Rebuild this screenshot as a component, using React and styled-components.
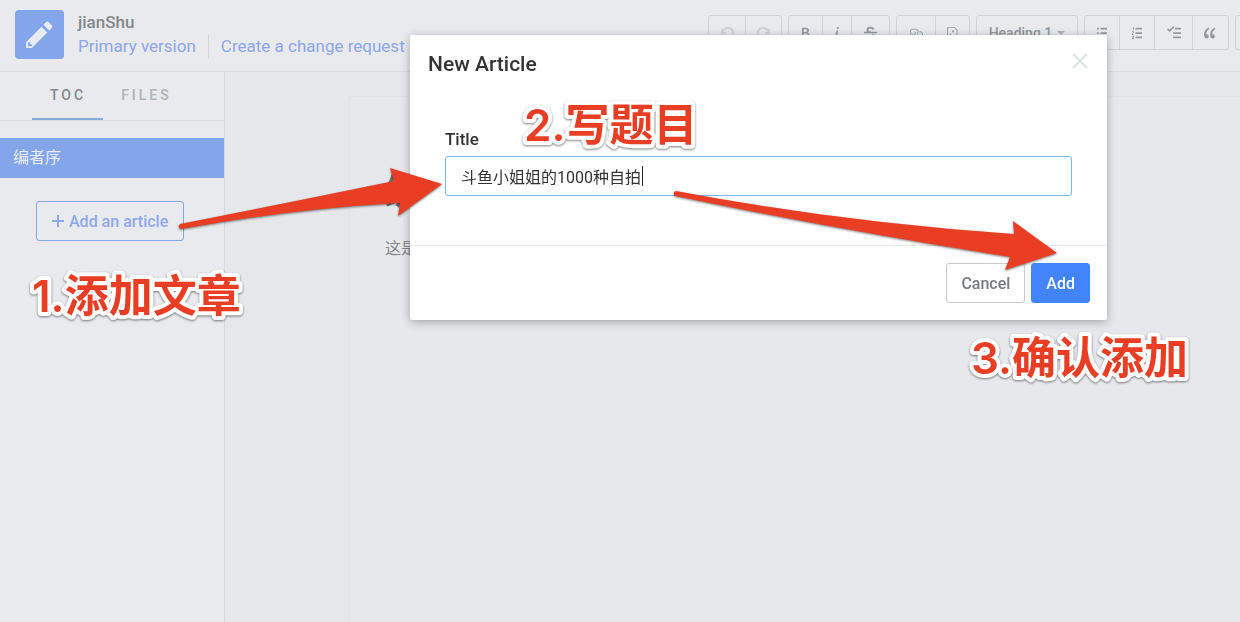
import React, { useState } from "react";
import styled, { createGlobalStyle } from "styled-components";
import { FaStrikethrough } from "react-icons/fa";

const GlobalStyle = createGlobalStyle`
  * {
    box-sizing: border-box;
  }
  body {
    margin: 0;
    background: #e5e7ea;
    color: #85888c;
    font-family: Roboto, "Noto Sans CJK SC", sans-serif;
    font-size: 16px;
  }
  button,
  input {
    font-family: inherit;
  }
`;

const icons = {
  pencil: {
    box: "0 0 14 16",
    d: "M0 12v3h3l8-8-3-3L0 12zm3 2H1v-2h1v1h1v1zm10.3-9.3L12 6 9 3l1.3-1.3a.996.996 0 0 1 1.41 0l1.59 1.59c.39.39.39 1.02 0 1.41z",
  },
  bold: {
    box: "0 0 10 16",
    d: "M1 2h3.83c2.48 0 4.3.75 4.3 2.95 0 1.14-.63 2.23-1.67 2.61v.06c1.33.3 2.3 1.23 2.3 2.86 0 2.39-1.97 3.52-4.61 3.52H1V2zm3.66 4.95c1.67 0 2.38-.66 2.38-1.69 0-1.17-.78-1.61-2.34-1.61H3.13v3.3h1.53zm.27 5.39c1.77 0 2.75-.64 2.75-1.98 0-1.27-.95-1.81-2.75-1.81h-1.8v3.8h1.8v-.01z",
  },
  italic: {
    box: "0 0 6 16",
    d: "M2.81 5h1.98L3 14H1l1.81-9zm.36-2.7c0-.7.58-1.3 1.33-1.3.56 0 1.13.38 1.13 1.03 0 .75-.59 1.3-1.33 1.3-.58 0-1.13-.38-1.13-1.03z",
  },
  link: {
    box: "0 0 16 16",
    d: "M4 9h1v1H4c-1.5 0-3-1.69-3-3.5S2.55 3 4 3h4c1.45 0 3 1.69 3 3.5 0 1.41-.91 2.72-2 3.25V8.59c.58-.45 1-1.27 1-2.09C10 5.22 8.98 4 8 4H4c-.98 0-2 1.22-2 2.5S3 9 4 9zm9-3h-1v1h1c1 0 2 1.22 2 2.5S13.98 12 13 12H9c-.98 0-2-1.22-2-2.5 0-.83.42-1.64 1-2.09V6.25c-1.09.53-2 1.84-2 3.25C6 11.31 7.55 13 9 13h4c1.45 0 3-1.69 3-3.5S14.5 6 13 6z",
  },
  media: {
    box: "0 0 12 16",
    d: "M6 5h2v2H6V5zm6-.5V14c0 .55-.45 1-1 1H1c-.55 0-1-.45-1-1V2c0-.55.45-1 1-1h7.5L12 4.5zM11 5L8 2H1v11l3-5 2 4 2-2 3 3V5z",
  },
  bullets: {
    box: "0 0 12 16",
    d: "M0 2h2v2H0zM4 2h8v2H4zM0 7h2v2H0zM4 7h8v2H4zM0 12h2v2H0zM4 12h8v2H4z",
  },
  numbers: {
    box: "0 0 12 16",
    d: "M4 2h8v2H4zM4 7h8v2H4zM4 12h8v2H4zM1 1h1v4H1zM0 6h2v1H0zM1 7h1v1H1zM0 8h1v1H0zM0 9h2v1H0zM0 11h2v1H0zM1 12h1v3H1zM0 13h1v1H0zM0 14h1v1H0z",
  },
  tasks: {
    box: "0 0 16 16",
    d: "M15.41 9H7.59C7 9 7 8.59 7 8c0-.59 0-1 .59-1h7.81c.59 0 .59.41.59 1 0 .59 0 1-.59 1h.01zM9.59 4C9 4 9 3.59 9 3c0-.59 0-1 .59-1h5.81c.59 0 .59.41.59 1 0 .59 0 1-.59 1H9.59zM0 3.91l1.41-1.3L3 4.2 7.09 0 8.5 1.41 3 6.91l-3-3zM7.59 12h7.81c.59 0 .59.41.59 1 0 .59 0 1-.59 1H7.59C7 14 7 13.59 7 13c0-.59 0-1 .59-1z",
  },
  quote: {
    box: "0 0 14 16",
    d: "M6.16 3.5C3.73 5.06 2.55 6.67 2.55 9.36c.16-.05.3-.05.44-.05 1.27 0 2.5.86 2.5 2.41 0 1.61-1.03 2.61-2.5 2.61-1.9 0-2.99-1.52-2.99-4.25 0-3.8 1.75-6.53 5.02-8.42L6.16 3.5zm7 0c-2.43 1.56-3.61 3.17-3.61 5.86.16-.05.3-.05.44-.05 1.27 0 2.5.86 2.5 2.41 0 1.61-1.03 2.61-2.5 2.61-1.89 0-2.98-1.52-2.98-4.25 0-3.8 1.75-6.53 5.02-8.42l1.14 1.84h-.01z",
  },
};

const Icon = ({ name, size = 14 }) => (
  <svg viewBox={icons[name].box} height={size} fill="currentColor" aria-hidden>
    <path d={icons[name].d} />
  </svg>
);

const Turn = ({ flip }) => (
  <svg width="16" height="16" viewBox="0 0 16 16" aria-hidden>
    <g
      fill="none"
      stroke="currentColor"
      strokeWidth="2"
      transform={flip ? "translate(16 0) scale(-1 1)" : undefined}
    >
      <path d="M3 4v4h4" />
      <path d="M3 7C6 1 14 2 14 8c0 4-3 6-7 6" />
    </g>
  </svg>
);

const App = () => {
  const [title, setTitle] = useState("斗鱼小姐姐的1000种自拍");

  return (
    <>
      <GlobalStyle />
      <StyledEditor>
        <StyledHeader>
          <Logo>
            <Icon name="pencil" size={31} />
          </Logo>
          <Book>
            <h1>jianShu</h1>
            <nav>
              <a href="#version">Primary version</a>
              <a href="#change">Create a change request</a>
            </nav>
          </Book>
          <Toolbar>
            <Group>
              <Tool $w={36} $faint aria-label="Undo">
                <Turn />
              </Tool>
              <Tool $w={36} $faint aria-label="Redo">
                <Turn flip />
              </Tool>
            </Group>
            <Group>
              <Tool $w={33} aria-label="Bold">
                <Icon name="bold" />
              </Tool>
              <Tool $w={29} aria-label="Italic">
                <Icon name="italic" />
              </Tool>
              <Tool $w={38} aria-label="Strikethrough">
                <FaStrikethrough size={13} />
              </Tool>
            </Group>
            <Group>
              <Tool $w={38} aria-label="Link">
                <Icon name="link" />
              </Tool>
              <Tool $w={34} aria-label="Image">
                <Icon name="media" />
              </Tool>
            </Group>
            <Group>
              <Tool $w={100}>
                Heading 1 <Caret />
              </Tool>
            </Group>
            <Group>
              <Tool $w={34} aria-label="Bullet list">
                <Icon name="bullets" />
              </Tool>
              <Tool $w={35} aria-label="Numbered list">
                <Icon name="numbers" />
              </Tool>
              <Tool $w={38} aria-label="Task list">
                <Icon name="tasks" />
              </Tool>
              <Tool $w={36} aria-label="Quote">
                <Icon name="quote" />
              </Tool>
            </Group>
            <Group>
              <Tool $w={36} aria-label="More" />
            </Group>
          </Toolbar>
        </StyledHeader>

        <Main>
          <Sidebar>
            <Tabs>
              <Tab $active>TOC</Tab>
              <Tab>FILES</Tab>
            </Tabs>
            <Article href="#preface">编者序</Article>
            <AddArticle>
              <svg width="12" height="12" viewBox="0 0 12 12" aria-hidden>
                <path d="M6 0v12M0 6h12" stroke="currentColor" strokeWidth="2" />
              </svg>
              Add an article
            </AddArticle>
          </Sidebar>
          <Page>
            <h2>编者序</h2>
            <p>这是</p>
          </Page>
        </Main>
      </StyledEditor>

      <Backdrop>
        <Modal role="dialog" aria-labelledby="modal-title">
          <ModalHeader>
            <h3 id="modal-title">New Article</h3>
            <Close aria-label="Close">
              <svg width="16" height="16" viewBox="0 0 16 16" aria-hidden>
                <path d="M1 1l14 14M15 1L1 15" stroke="currentColor" strokeWidth="2" />
              </svg>
            </Close>
          </ModalHeader>
          <ModalBody>
            <label htmlFor="title">Title</label>
            <Field>
              <input
                id="title"
                autoFocus
                value={title}
                onChange={(e) => setTitle(e.target.value)}
              />
              <TextCursor>
                <span>{title}</span>
              </TextCursor>
            </Field>
          </ModalBody>
          <ModalFooter>
            <Button>Cancel</Button>
            <Button $primary>Add</Button>
          </ModalFooter>
        </Modal>
      </Backdrop>

      <Annotations width="1240" height="622" viewBox="0 0 1240 622">
        <path d="M180 224Q287 203 394 181L390 168L442 184L398 216L400 203Q290 209 181 229Q177 227 180 224Z" />
        <path d="M676 191Q840 222 1014 234L1013 221L1057 253L1005 270L1010 257Q840 230 675 196Q672 192 676 191Z" />
        <text x="32" y="312">1.添加文章</text>
        <text x="524" y="141">2.写题目</text>
        <text x="971" y="374">3.确认添加</text>
      </Annotations>
    </>
  );
};

const StyledEditor = styled.div`
  min-height: 100vh;
  display: flex;
  flex-direction: column;
`;

const StyledHeader = styled.header`
  display: flex;
  align-items: flex-start;
  height: 72px;
  padding: 10px 0 0 15px;
  background: #e8eaed;
  border-bottom: 1px solid #dadcdf;
  overflow: hidden;
`;

const Logo = styled.div`
  display: flex;
  flex: none;
  align-items: center;
  justify-content: center;
  width: 49px;
  height: 49px;
  border-radius: 4px;
  background: #83a5e9;
  color: #e8ebf2;
`;

const Book = styled.div`
  flex: none;
  margin-left: 14px;
  line-height: 24px;

  h1 {
    margin: 0;
    font-size: 17px;
    font-weight: 500;
  }
  nav {
    display: flex;
  }
  a {
    color: #8ca6e8;
    font-size: 17px;
    text-decoration: none;
  }
  a + a {
    margin-left: 12px;
    padding-left: 12px;
    border-left: 1px solid #d4d6da;
  }
`;

const Toolbar = styled.div`
  display: flex;
  gap: 6px;
  margin: 5px -33px 0 auto;
`;

const Group = styled.div`
  display: flex;
  height: 35px;
  border: 1px solid #d0d2d5;
  border-radius: 3px;
`;

const Tool = styled.button`
  display: flex;
  align-items: center;
  justify-content: center;
  width: ${({ $w }) => $w}px;
  padding: 0;
  border: 0;
  background: none;
  color: ${({ $faint }) => ($faint ? "#d0d2d5" : "#96999d")};
  font-size: 14px;
  font-weight: 500;

  & + & {
    border-left: 1px solid #d0d2d5;
  }
`;

const Caret = styled.span`
  margin-left: 5px;
  border: 4px solid transparent;
  border-top-color: #b0b2b5;
  border-bottom: 0;
`;

const Main = styled.div`
  display: flex;
  flex: 1;
`;

const Sidebar = styled.aside`
  display: flex;
  flex-direction: column;
  align-items: flex-start;
  width: 225px;
  background: #e8eaed;
  border-right: 1px solid #d6d8db;
`;

const Tabs = styled.div`
  display: flex;
  width: 100%;
  height: 49px;
  padding-left: 32px;
  border-bottom: 1px solid #dadcdf;
`;

const Tab = styled.button`
  padding: 0 17px 0 18px;
  border: 0;
  border-bottom: 2px solid ${({ $active }) => ($active ? "#86a9dc" : "transparent")};
  background: none;
  color: ${({ $active }) => ($active ? "#85888c" : "#b0b2b6")};
  font-size: 14px;
  font-weight: 500;
  letter-spacing: 3px;
`;

const Article = styled.a`
  width: 100%;
  margin-top: 17px;
  padding: 0 13px;
  background: #83a5e9;
  color: #e8ebf2;
  line-height: 40px;
  text-decoration: none;
`;

const AddArticle = styled.button`
  display: flex;
  align-items: center;
  gap: 5px;
  height: 40px;
  margin: 23px 0 0 36px;
  padding: 0 15px;
  border: 1px solid #83a5e9;
  border-radius: 3px;
  background: none;
  color: #8ca9ea;
  font-size: 16px;
  font-weight: 500;
`;

const Page = styled.article`
  flex: 1;
  margin: 24px 0 0 124px;
  padding: 74px 35px;
  background: #e7e8ec;
  border: 1px solid #e0e2e5;
  border-width: 1px 0 0 1px;

  h2 {
    margin: 0;
    color: #6d6f72;
    font-size: 36px;
    line-height: 44px;
  }
  p {
    margin: 21px 0 0;
    line-height: 26px;
  }
`;

const Backdrop = styled.div`
  position: fixed;
  inset: 0;
  padding: 35px 133px 0 410px;
`;

const Modal = styled.div`
  border-radius: 2px;
  background: #fff;
  box-shadow: 0 2px 10px rgba(0, 0, 0, 0.3);
`;

const ModalHeader = styled.div`
  display: flex;
  align-items: center;
  justify-content: space-between;
  height: 57px;
  padding: 0 18px;

  h3 {
    margin: 0;
    color: #333;
    font-size: 21px;
    font-weight: 500;
  }
`;

const Close = styled.button`
  display: flex;
  padding: 0 1px 5px;
  border: 0;
  background: none;
  color: #dde1e1;
`;

const ModalBody = styled.div`
  display: flex;
  flex-direction: column;
  gap: 5px;
  padding: 35px 35px 49px;

  label {
    color: #333;
    font-size: 17px;
    font-weight: 500;
    line-height: 24px;
  }
`;

const Field = styled.div`
  position: relative;
  color: #333;
  font-size: 16px;

  input {
    display: block;
    width: 100%;
    height: 40px;
    padding: 0 15px;
    border: 1px solid #79b8ee;
    border-radius: 3px;
    outline: 0;
    color: inherit;
    font-size: inherit;
    caret-color: transparent;
  }
`;

// steady text cursor, pushed along by a hidden copy of the value
const TextCursor = styled.div`
  position: absolute;
  inset: 10px 15px;
  display: flex;
  overflow: hidden;
  pointer-events: none;

  span {
    visibility: hidden;
    white-space: pre;
  }
  &::after {
    content: "";
    width: 1px;
    margin-left: 2px;
    background: #222;
  }
`;

const ModalFooter = styled.div`
  display: flex;
  justify-content: flex-end;
  gap: 6px;
  padding: 17px;
  border-top: 1px solid #e8e9ea;
`;

const Button = styled.button`
  height: 40px;
  padding: 0 14px;
  border: 1px solid ${({ $primary }) => ($primary ? "#4284fb" : "#c8cacd")};
  border-radius: 3px;
  background: ${({ $primary }) => ($primary ? "#4284fb" : "#fff")};
  color: ${({ $primary }) => ($primary ? "#fff" : "#777a7e")};
  font-size: 16px;
  font-weight: 500;
`;

const Annotations = styled.svg`
  position: absolute;
  top: 0;
  left: 0;
  fill: #ea3e24;
  filter: drop-shadow(0 1px 1px rgba(0, 0, 0, 0.5));
  pointer-events: none;

  text {
    font-family: Inter, "Noto Sans CJK SC", sans-serif;
    font-size: 44px;
    font-weight: 600;
    paint-order: stroke fill;
    stroke: #fff;
    stroke-width: 8px;
    stroke-linejoin: round;
  }
`;

export default App;
